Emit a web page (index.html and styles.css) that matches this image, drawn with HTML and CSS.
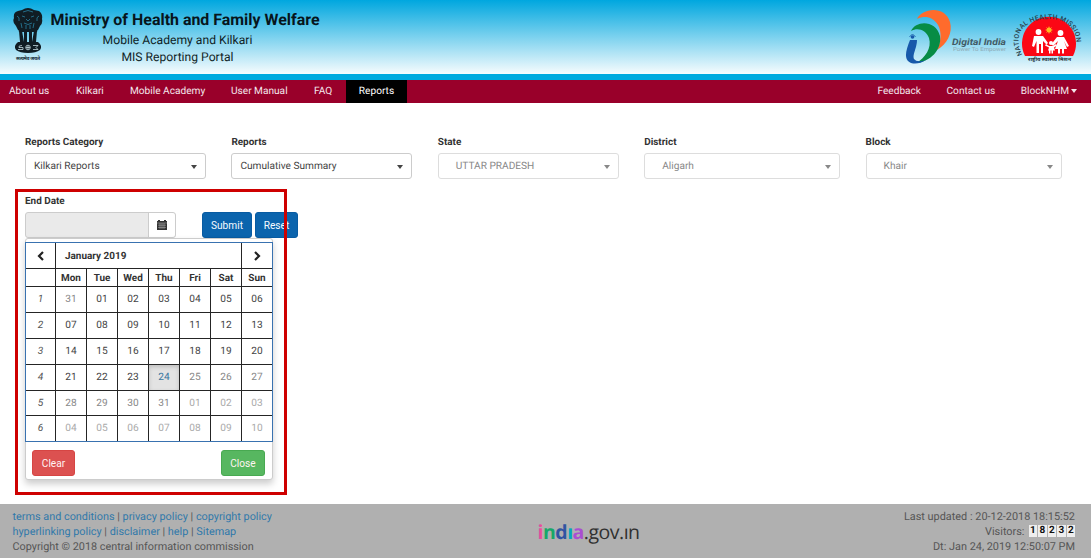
FILE: index.html
```html
<!DOCTYPE html>
<html lang="en">
<head>
<meta charset="utf-8">
<title>MIS Reporting Portal</title>
<link rel="stylesheet" href="styles.css">
</head>
<body>
<header class="banner">
  <svg class="emblem" viewBox="0 0 32 54" width="32" height="54">
    <g fill="#101d24">
      <path d="M10 3Q16-1 22 3L27 4Q31 7 30 12Q31 16 28 19L26 23H6L4 19Q0 15 2 11Q1 5 6 4Z"/>
      <path d="M6 21h20l-1 4H7zM7 24h3l2 11H8zM12 24h3v11h-3zM17 24h3v11h-3zM22 24h3l-1 11h-4z"/>
      <path d="M6 35H26Q31 39 28 43Q24 46 16 46T4 43Q1 39 6 35Z"/>
    </g>
    <g fill="none" stroke="#2d91b5" stroke-width=".7">
      <path d="M11 5q5-3 10 0M10 9l3 1m6 0l3-1M14 12l2 2 2-2M5 9q3 1 2 5m20-5q-3 1-2 5M12 16q4 3 8 0M9 16l1 5m12-5l-1 5M14 18v4m4-4v4"/>
      <circle cx="16" cy="40.500" r="2.300" stroke="#d8f0f7"/><path stroke="#d8f0f7" d="M10 38.500q-4 0-3 2h4v2H6M21 38.500h5l-2 2 2 2h-5M14 40.500h4M16 38.500v4"/>
    </g>
    <text x="16" y="53" font-size="5" text-anchor="middle" textLength="24" class="motto">सत्यमेव जयते</text>
  </svg>
  <div class="titles">
    <h1>Ministry of Health and Family Welfare</h1>
    <p>Mobile Academy and Kilkari</p>
    <p class="portal">MIS Reporting Portal</p>
  </div>
  <svg class="partners" viewBox="0 0 186 64" width="186" height="64">
    <path fill="#ff6b2c" d="M12 14C17 3 40 0 45 17C48 28 42 39 32 45C36 37 37 27 33 20C28 12 20 10 12 14Z"/>
    <path fill="#078c45" d="M6 26C11 15 31 15 35 31C37 45 25 57 11 58C20 53 27 43 24 33C21 25 13 22 6 26Z"/>
    <path fill="#1759aa" d="M5 35H12C12 43 7 50 9 54Q12 58 21 55Q13 60 6 58C-2 55 1 45 5 35Z"/>
    <circle cx="7.500" cy="32" r="1.800" fill="#1759aa"/><path d="M4.500 32q3-5 6 0" fill="none" stroke="#1759aa" stroke-width=".8"/>
    <text x="47" y="39.500" class="digital" textLength="54" lengthAdjust="spacingAndGlyphs">Digital India</text>
    <text x="48" y="46" class="empower" textLength="53" lengthAdjust="spacingAndGlyphs">Power To Empower</text>
    <path fill="#fb0715" d="M120 51A27 27 0 1 1 168 51Z"/>
    <circle cx="144" cy="25" r="2.500" fill="#ffba22"/><path d="M144 21.500v7M140.500 25h7M141.500 22.500l5 5m0-5l-5 5" stroke="#ffba22" stroke-width=".8"/>
    <g fill="#fff">
      <circle cx="133.500" cy="27" r="2.900"/><path d="M129 31h9l5 7-1.500 1.500L138 36v12h-2v-9h-2v9h-2.500V36l-2.500 6-2-1z"/>
      <circle cx="155.500" cy="28" r="2.900"/><path d="M152 32h7l5 9-2 1-3-6 3 8h-3v4.500h-2V44h-2v4.500h-2V44h-3l3-8-5 5-1.500-2z"/>
      <circle cx="146" cy="38" r="2"/><path d="M144 41h4l3-2 1 1.500-3 2 1 3h-2v3h-1.500v-3h-1v3H144v-3h-1l1-3-4-2 1-1.500z"/>
    </g>
    <path id="mission-arc" d="M117.500 50C105 25 124 14 144 14C165 14 178 30 168 51" fill="none"/>
    <text class="mission"><textPath href="#mission-arc" textLength="97">NATIONAL HEALTH MISSION</textPath></text>
    <text x="123" y="56" class="hindi" textLength="43" lengthAdjust="spacingAndGlyphs">राष्ट्रीय स्वास्थ्य मिशन</text>
  </svg>
</header>
<nav class="nav">
  <a class="about">About us</a><a class="kilkari">Kilkari</a><a class="academy">Mobile Academy</a><a class="manual">User Manual</a><a class="faq">FAQ</a><a class="active">Reports</a>
  <div class="account"><a>Feedback</a><a>Contact us</a><a>BlockNHM<i class="caret"></i></a></div>
</nav>
<main class="content">
  <div class="filters">
    <label class="field">Reports Category<span class="select">Kilkari Reports<i class="caret"></i></span></label>
    <label class="field">Reports<span class="select">Cumulative Summary<i class="caret"></i></span></label>
    <label class="field">State<span class="select locked">UTTAR PRADESH<i class="caret"></i></span></label>
    <label class="field">District<span class="select locked">Aligarh<i class="caret"></i></span></label>
    <label class="field">Block<span class="select locked">Khair<i class="caret"></i></span></label>
  </div>
  <section class="date-area">
    <div class="date-label">End Date</div>
    <div class="date-row">
      <div class="date-input"><span></span><button aria-label="Open calendar"><svg width="10" height="10" viewBox="0 0 10 10"><path fill="#333" d="M0 1h1V0h2v1h4V0h2v1h1v9H0z"/><path stroke="#fff" stroke-opacity=".65" stroke-width=".5" d="M0 3h10M1 5.200h8M1 7.400h8M3 3v6M5 3v6M7 3v6"/></svg></button></div>
      <button class="blue submit">Submit</button><button class="blue">Reset</button>
    </div>
    <div class="calendar">
      <table>
        <colgroup><col class="week-col"><col><col><col><col><col><col><col></colgroup>
        <tr class="month"><th><svg width="8" height="10" viewBox="0 0 8 10"><path d="M6 1L2 5l4 4" fill="none" stroke="#222" stroke-width="2.200"/></svg></th><th colspan="6" class="month-name">January 2019</th><th><svg width="8" height="10" viewBox="0 0 8 10"><path d="M2 1l4 4-4 4" fill="none" stroke="#222" stroke-width="2.200"/></svg></th></tr>
        <tr class="days"><th></th><th>Mon</th><th>Tue</th><th>Wed</th><th>Thu</th><th>Fri</th><th>Sat</th><th>Sun</th></tr>
        <tr><td>1</td><td class="muted">31</td><td>01</td><td>02</td><td>03</td><td>04</td><td>05</td><td>06</td></tr>
        <tr><td>2</td><td>07</td><td>08</td><td>09</td><td>10</td><td>11</td><td>12</td><td>13</td></tr>
        <tr><td>3</td><td>14</td><td>15</td><td>16</td><td>17</td><td>18</td><td>19</td><td>20</td></tr>
        <tr><td>4</td><td>21</td><td>22</td><td>23</td><td class="today">24</td><td class="muted">25</td><td class="muted">26</td><td class="muted">27</td></tr>
        <tr class="short"><td>5</td><td class="muted">28</td><td class="muted">29</td><td class="muted">30</td><td class="muted">31</td><td class="next">01</td><td class="next">02</td><td class="next">03</td></tr>
        <tr><td>6</td><td class="next">04</td><td class="next">05</td><td class="next">06</td><td class="next">07</td><td class="next">08</td><td class="next">09</td><td class="next">10</td></tr>
      </table>
      <div class="calendar-actions"><button class="clear">Clear</button><button class="close">Close</button></div>
    </div>
    <div class="highlight"></div>
  </section>
</main>
<footer class="footer">
  <div class="legal"><div><a>terms and conditions</a> | <a>privacy policy</a> | <a>copyright policy</a></div><div><a>hyperlinking policy</a> | <a>disclaimer</a> | <a>help</a> | <a>Sitemap</a></div><div>Copyright © 2018 central information commission</div></div>
  <div class="india"><b class="i1">i</b><b class="n">n</b><b class="d">d</b><b class="i2">ı</b><b class="a">a</b>.gov.ın</div>
  <div class="meta"><div>Last updated : 20-12-2018 18:15:52</div><div class="visitors">Visitors: <span class="counter"><b>1</b><b>8</b><b>2</b><b>3</b><b>2</b></span></div><div>Dt: Jan 24, 2019 12:50:07 PM</div></div>
</footer>
</body>
</html>
```
FILE: styles.css
```css
* { box-sizing: border-box; }
body { margin: 0; width: 1091px; height: 558px; overflow: hidden; display: flex; flex-direction: column; background: #fff; color: #444; font-family: Roboto, sans-serif; font-size: 10.15px; text-rendering: geometricPrecision; }
button { font: inherit; padding: 0; }
.banner { height: 80px; flex: none; display: flex; border-bottom: 6px solid #00aadf; background: linear-gradient(#00a7df, #f7fcfe); padding-left: 12px; }
.emblem { margin-top: 7px; flex: none; }
.motto { fill: #182f39; font-family: "Noto Sans", sans-serif; font-weight: bold; }
.titles { width: 270px; margin-left: 6.5px; color: #101f27; text-align: center; }
h1 { margin: 10px 0 0; font-size: 15.95px; font-weight: 700; line-height: 20px; white-space: nowrap; color: #07151c; text-align: left; }
.titles p { margin: 2px 0 0 -16px; font-size: 12.15px; line-height: 17px; }
.titles .portal { margin-top: 0; }
.partners { margin: 5px 0 0 auto; }
.digital { font-size: 9px; font-style: italic; font-weight: 700; fill: #425b66; }
.empower { font-size: 5.5px; fill: #8fabb5; }
.mission { font-size: 6.8px; font-weight: 500; fill: #27414c; }
.hindi { font: bold 5px "Noto Sans", sans-serif; fill: #28373d; }
.nav { height: 23px; flex: none; background: #99002a; color: #f3e5ea; display: flex; align-items: stretch; line-height: 23px; padding-left: 9px; }
.nav a { white-space: nowrap; }
.about { width: 67px; }
.kilkari { width: 54px; }
.academy { width: 101px; }
.manual { width: 83px; }
.faq { width: 32px; }
.active { width: 61px; text-align: center; background: #000; color: #fff; }
.account { display: flex; gap: 25.5px; margin-left: auto; padding-right: 14px; }
.caret { display: inline-block; border: 3.5px solid transparent; border-top: 4px solid currentColor; border-bottom: 0; vertical-align: 1px; margin-left: 2px; }
.content { flex: 1; padding: 34px 25px 0; }
.filters { display: grid; grid-template-columns: 181px 181px 181px 196px 196px; column-gap: 25.4px; }
.field, .date-label { color: #333; font-weight: 700; font-size: 9.95px; line-height: 12px; }
.select { display: flex; align-items: center; justify-content: space-between; height: 26px; margin-top: 4px; padding: 1px 8px 0; border: 1px solid #ccc; border-radius: 3px; font-weight: 400; font-size: 10.15px; color: #444; }
.locked { padding-left: 17px; color: #888; border-color: #ddd; }
.date-area { position: relative; margin-top: 17px; }
.date-row { height: 26px; margin-top: 4px; display: flex; gap: 3px; }
.date-input { width: 151px; height: 26px; display: flex; border: 1px solid #ccc; border-radius: 3px; background: #eaeaea; margin-right: 23px; }
.date-input span { flex: 1; }
.date-input button { width: 27px; border: 0; border-left: 1px solid #ccc; background: #fff; display: grid; place-items: center; border-radius: 0 3px 3px 0; }
.blue { width: 43px; border: 1px solid #085ba2; border-radius: 3px; color: #f6faff; background: #0b64ad; }
.submit { width: 50px; }
.calendar { position: absolute; z-index: 2; left: 0; top: 42px; width: 248px; height: 242px; background: #fff; border: 1px solid #ccc; border-radius: 3px; box-shadow: 0 4px 7px rgba(0,0,0,.2); padding-top: 3px; }
table { width: 247px; margin-left: -1px; table-layout: fixed; border-collapse: collapse; text-align: center; outline: 1px solid #3972b0; outline-offset: -1px; }
col { width: 31px; }
.week-col { width: 30px; }
tr { height: 26px; }
.days { height: 18px; }
.short { height: 25px; }
th, td { border: 1px solid #252525; padding: 0; line-height: 15px; }
th { font-weight: 700; font-size: 9.95px; color: #333; padding-top: 1px; }
th svg { display: block; margin: -1px auto 0; }
.month .month-name { text-align: left; padding-left: 9px; }
td:first-child { font-style: italic; color: #555; }
.muted { color: #888; }
.next { color: #aaa; }
.today { background: #e3e3e3; color: #3876a0; box-shadow: inset 0 2px 4px rgba(0,0,0,.16); }
.calendar-actions { display: flex; justify-content: space-between; padding: 8px 7px 0 6px; }
.calendar-actions button { width: 43px; height: 26px; border-radius: 3px; color: #fff4f2; }
.calendar-actions .clear { background: #dc5150; border: 1px solid #d64543; }
.calendar-actions .close { width: 44px; background: #57b760; border: 1px solid #48a951; }
.highlight { position: absolute; z-index: 3; left: -10px; top: -7px; width: 272px; height: 306px; border: 3px solid #ce0000; }
.footer { height: 54px; flex: none; background: #b0b0b0; font-size: 10.9px; line-height: 15px; padding: 4.5px 16px 0 12.5px; display: flex; color: #555; }
.legal { width: 525px; white-space: nowrap; font-size: 10.85px; }
.legal a { color: #3179aa; }
.india { width: 104px; font: 500 19.5px/45px "Open Sans", sans-serif; color: #303030; letter-spacing: -.5px; white-space: nowrap; }
.india b { font-weight: 700; }
.i1 { color: #e74f9d; } .n { color: #16a869; } .d { color: #3154a2; } .i2 { color: #00a9bd; } .a { color: #a94ed2; }
.meta { margin-left: auto; text-align: right; white-space: nowrap; }
.visitors { display: flex; justify-content: flex-end; gap: 4px; }
.counter { display: flex; gap: 1px; align-items: center; }
.counter b { height: 12px; width: 8.5px; text-align: center; line-height: 12px; background: #eee; color: #111; font-size: 10px; }
```
